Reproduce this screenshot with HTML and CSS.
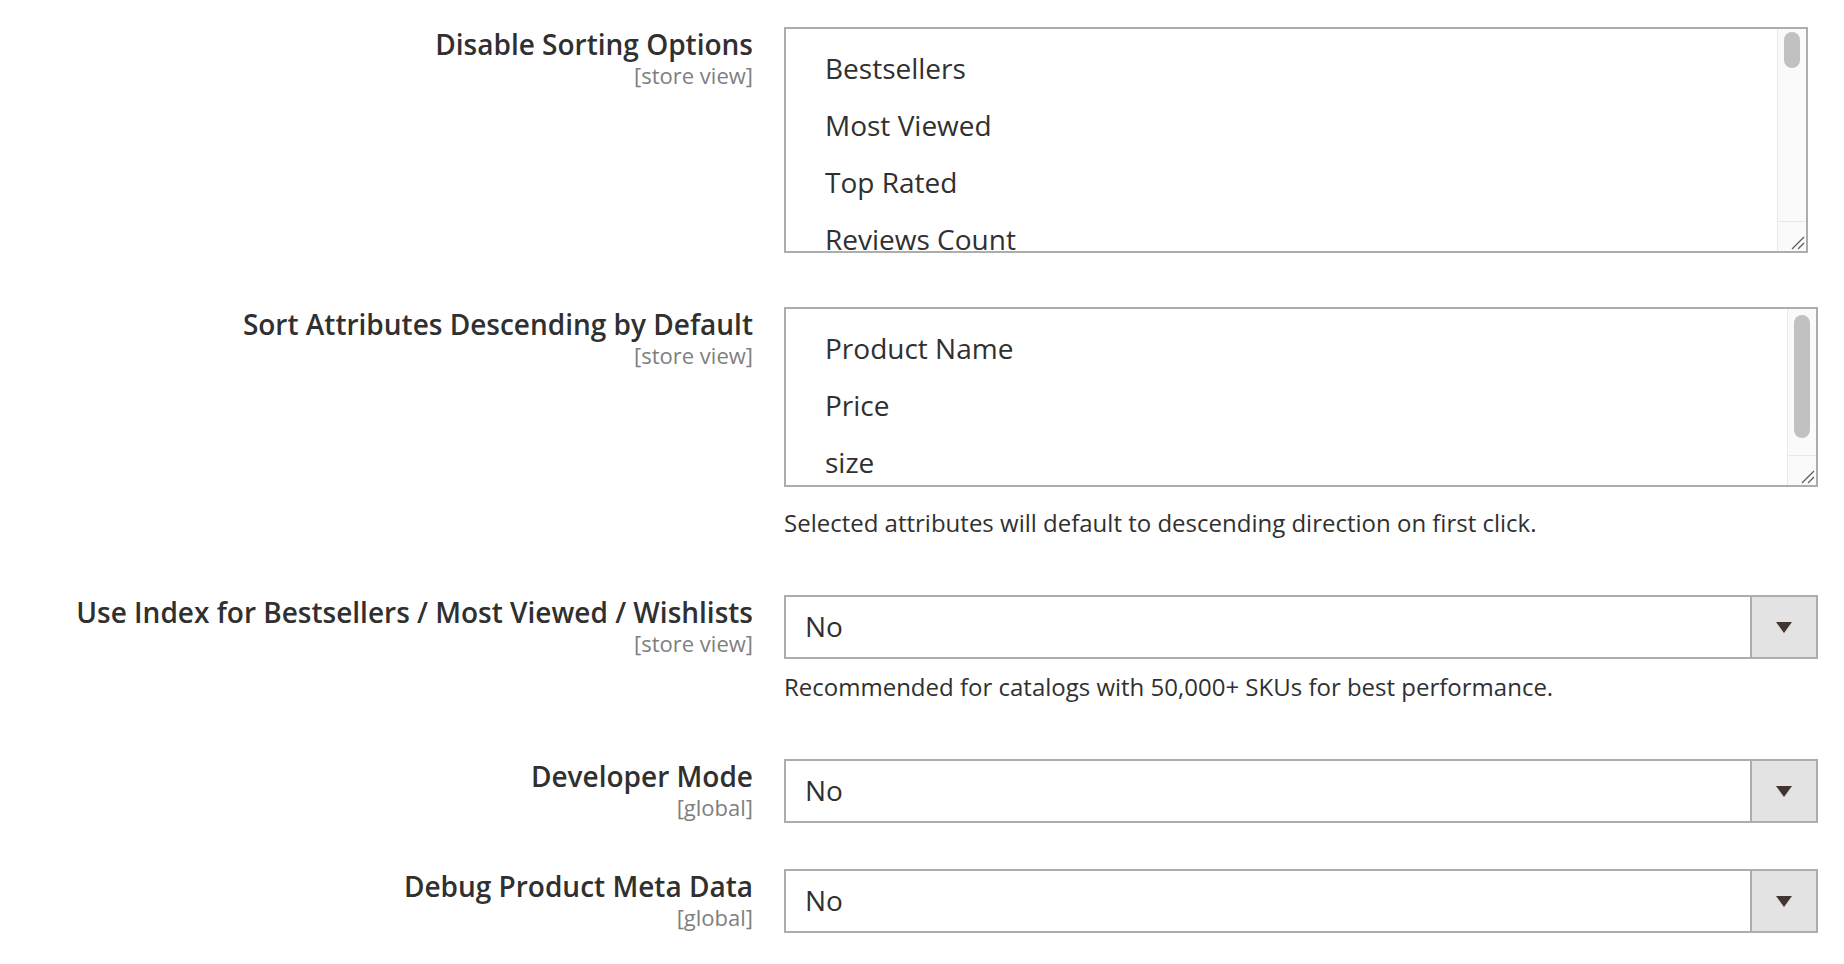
FILE: index.html
```html
<!DOCTYPE html>
<html lang="en">

<head>
    <meta charset="UTF-8">
    <meta name="viewport" content="width=device-width, initial-scale=1.0">
    <title>Catalog Storefront</title>
    <link rel="stylesheet" href="styles.css">
</head>

<body>
    <div class="config">
        <!-- multiselect rows -->
        <div class="field">
            <div class="field-label">
                <label>Disable Sorting Options</label>
                <span class="scope">[store view]</span>
            </div>
            <div class="field-control">
                <div class="multiselect multiselect-sorting">
                    <div class="options">
                        <div class="option">Bestsellers</div>
                        <div class="option">Most Viewed</div>
                        <div class="option">Top Rated</div>
                        <div class="option">Reviews Count</div>
                        <div class="option">New Products</div>
                        <div class="option">Position</div>
                    </div>
                    <div class="scrollbar">
                        <div class="thumb thumb-short"></div>
                        <div class="resizer">
                            <svg width="14" height="14" viewBox="0 0 14 14">
                                <path d="M1 13L13 1M7 13L13 7" stroke="#5a5a5a" stroke-width="1.2" fill="none" />
                            </svg>
                        </div>
                    </div>
                </div>
            </div>
        </div>

        <div class="field">
            <div class="field-label">
                <label>Sort Attributes Descending by Default</label>
                <span class="scope">[store view]</span>
            </div>
            <div class="field-control">
                <div class="multiselect multiselect-attrs">
                    <div class="options">
                        <div class="option">Product Name</div>
                        <div class="option">Price</div>
                        <div class="option">size</div>
                    </div>
                    <div class="scrollbar">
                        <div class="thumb thumb-long"></div>
                        <div class="resizer">
                            <svg width="14" height="14" viewBox="0 0 14 14">
                                <path d="M1 13L13 1M7 13L13 7" stroke="#5a5a5a" stroke-width="1.2" fill="none" />
                            </svg>
                        </div>
                    </div>
                </div>
                <p class="note">Selected attributes will default to descending direction on first click.</p>
            </div>
        </div>

        <!-- yes/no selects -->
        <div class="field">
            <div class="field-label">
                <label>Use Index for Bestsellers / Most Viewed / Wishlists</label>
                <span class="scope">[store view]</span>
            </div>
            <div class="field-control">
                <div class="select">
                    <div class="select-value">No</div>
                    <div class="select-button"><span class="arrow"></span></div>
                </div>
                <p class="note">Recommended for catalogs with 50,000+ SKUs for best performance.</p>
            </div>
        </div>

        <div class="field">
            <div class="field-label">
                <label>Developer Mode</label>
                <span class="scope">[global]</span>
            </div>
            <div class="field-control">
                <div class="select">
                    <div class="select-value">No</div>
                    <div class="select-button"><span class="arrow"></span></div>
                </div>
            </div>
        </div>

        <div class="field">
            <div class="field-label">
                <label>Debug Product Meta Data</label>
                <span class="scope">[global]</span>
            </div>
            <div class="field-control">
                <div class="select">
                    <div class="select-value">No</div>
                    <div class="select-button"><span class="arrow"></span></div>
                </div>
            </div>
        </div>
    </div>
</body>

</html>
```

FILE: styles.css
```css
* {
    padding: 0;
    margin: 0;
    box-sizing: border-box;
}

body {
    background: #fff;
    color: #303030;
    font-family: "Open Sans", "Noto Sans", sans-serif;
}

.config {
    padding-top: 27px;
}

.field {
    display: flex;
    gap: 31px;
    margin-bottom: 46px;
}

.field-label {
    width: 753px;
    flex: none;
    text-align: right;
}

.field-label label {
    display: block;
    font-size: 28px;
    font-weight: 600;
    line-height: 34px;
}

.scope {
    display: block;
    font-size: 22px;
    line-height: 28px;
    color: #808080;
}

.field-control {
    width: 1034px;
    display: flex;
    flex-direction: column;
    align-items: flex-start;
}

/* listbox with a drawn scrollbar */
.multiselect {
    display: flex;
    border: 2px solid #adadad;
    margin-bottom: 8px;
    background: #fff;
}

.multiselect-sorting {
    width: 1024px;
    height: 226px;
}

.multiselect-attrs {
    width: 1034px;
    height: 180px;
}

.options {
    flex: 1;
    overflow: hidden;
    padding: 11px 0 0 39px;
}

.option {
    font-size: 28px;
    line-height: 57px;
    white-space: nowrap;
}

.scrollbar {
    width: 29px;
    display: flex;
    flex-direction: column;
    align-items: center;
    background: #fafafa;
    border-left: 1px solid #e8e8e8;
}

.thumb {
    width: 16px;
    border-radius: 8px;
    background: #c1c1c1;
}

.thumb-short {
    margin-top: 3px;
    height: 36px;
}

.thumb-long {
    margin-top: 6px;
    height: 123px;
}

.resizer {
    margin-top: auto;
    width: 100%;
    height: 30px;
    border-top: 1px solid #e8e8e8;
    display: flex;
    align-items: flex-end;
    justify-content: flex-end;
    padding: 0 1px 1px 0;
}

.resizer svg {
    display: block;
}

.note {
    font-size: 24px;
    line-height: 36px;
    margin: 10px 0 8px;
}

/* single select */
.select {
    display: flex;
    width: 100%;
    height: 64px;
    border: 2px solid #adadad;
}

.select-value {
    flex: 1;
    padding-left: 19px;
    font-size: 28px;
    line-height: 58px;
}

.select-button {
    width: 66px;
    border-left: 2px solid #adadad;
    background: #e3e3e3;
    display: flex;
    align-items: center;
    justify-content: center;
}

.arrow {
    width: 0;
    height: 0;
    border-left: 8px solid transparent;
    border-right: 8px solid transparent;
    border-top: 11px solid #41362f;
}
```
